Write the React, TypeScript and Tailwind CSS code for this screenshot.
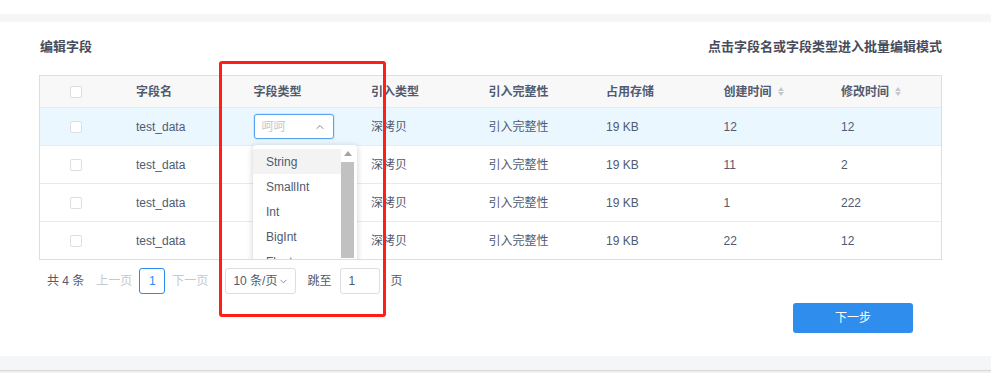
import { ChevronDown, ChevronUp } from 'lucide-react';

const rows = [
  { name: 'test_data', created: '12', modified: '12' },
  { name: 'test_data', created: '11', modified: '2' },
  { name: 'test_data', created: '1', modified: '222' },
  { name: 'test_data', created: '22', modified: '12' },
];

const types = ['String', 'SmallInt', 'Int', 'BigInt', 'Float', 'Double'];

const cols = 'grid grid-cols-[78px_repeat(6,117.5px)_1fr]';

const Checkbox = () => (
  <div className="flex justify-center pr-[6px]">
    <span className="block h-[12px] w-[12px] rounded-[2px] border border-[#dcdee2] bg-white" />
  </div>
);

const SortIcon = () => (
  <span className="ml-[6px] inline-flex flex-col gap-[1px]">
    <span className="h-0 w-0 border-x-[3.5px] border-b-[4px] border-x-transparent border-b-[#c5c8ce]" />
    <span className="h-0 w-0 border-x-[3.5px] border-t-[4px] border-x-transparent border-t-[#c5c8ce]" />
  </span>
);

// dropdown for the field type select, clipped by the table
const TypeDropdown = () => (
  <div className="absolute left-[213px] top-[69px] z-10 flex h-[220px] w-[104px] rounded-[3px] bg-white shadow-[0_1px_6px_rgba(0,0,0,0.2)]">
    <div className="flex-1 pt-[4px]">
      {types.map((t, i) => (
        <div
          key={t}
          className={`flex h-[25px] items-center pl-[13px] text-[12px] text-[#515a6e] ${i === 0 ? 'bg-[#f3f3f3]' : ''}`}
        >
          {t}
        </div>
      ))}
    </div>
    <div className="mr-[3px] flex w-[13px] flex-col items-center pt-[6px]">
      <span className="h-0 w-0 border-x-[4px] border-b-[5px] border-x-transparent border-b-[#a3a3a3]" />
      <div className="mt-[6px] h-[96px] w-full bg-[#c1c1c1]" />
    </div>
  </div>
);

export default function App() {
  return (
    <div
      className="relative h-[373px] w-[991px] overflow-hidden bg-white"
      style={{ fontFamily: '"Liberation Sans", "Noto Sans CJK SC", sans-serif' }}
    >
      <div className="h-[14px] bg-white" />
      <div className="h-[8px] bg-[#f5f6f7]" />

      <div className="h-[334px] bg-white px-[39px] pt-[15px]">
        <div className="mr-[10px] flex h-[20px] items-center justify-between pl-[1px] text-[13px] font-bold text-[#464c5b]">
          <span>编辑字段</span>
          <span>点击字段名或字段类型进入批量编辑模式</span>
        </div>

        <div className="relative mr-[10px] mt-[18px] overflow-hidden border border-[#dcdee2]">
          <div className={`${cols} h-[31px] items-center bg-[#f8f8f9] text-[12px] font-bold text-[#515a6e]`}>
            <Checkbox />
            {['字段名', '字段类型', '引入类型', '引入完整性', '占用存储'].map((h) => (
              <div key={h} className="pl-[18px]">
                {h}
              </div>
            ))}
            <div className="flex items-center pl-[18px]">
              创建时间
              <SortIcon />
            </div>
            <div className="flex items-center pl-[18px]">
              修改时间
              <SortIcon />
            </div>
          </div>

          {rows.map((r, i) => (
            <div
              key={i}
              className={`${cols} h-[38px] items-center border-t border-[#e8eaec] text-[12px] text-[#515a6e] ${i === 0 ? 'bg-[#ebf7ff]' : 'bg-white'}`}
            >
              <Checkbox />
              <div className="pl-[18px]">{r.name}</div>
              <div className="pl-[18px]">
                {i === 0 && (
                  <div className="flex h-[25px] w-[80px] items-center justify-between rounded-[3px] border border-[#57a3f3] bg-white pl-[7px] pr-[7px] shadow-[0_0_0_1px_rgba(45,140,240,0.12)]">
                    <span className="text-[12px] text-[#c5c8ce]">呵呵</span>
                    <ChevronUp size={12} strokeWidth={2} className="text-[#808695]" />
                  </div>
                )}
              </div>
              <div className="pl-[18px]">深拷贝</div>
              <div className="pl-[18px]">引入完整性</div>
              <div className="pl-[18px]">19 KB</div>
              <div className="pl-[18px]">{r.created}</div>
              <div className="pl-[18px]">{r.modified}</div>
            </div>
          ))}

          <TypeDropdown />
        </div>

        <div className="mt-[8px] flex h-[26px] items-center whitespace-nowrap pl-[8px] text-[12px] text-[#515a6e]">
          <span>共 4 条</span>
          <span className="ml-[12px] text-[#c5c8ce]">上一页</span>
          <span className="ml-[7px] flex h-[26px] w-[26px] items-center justify-center rounded-[3px] border border-[#2d8cf0] text-[#2d8cf0]">
            1
          </span>
          <span className="ml-[7px] text-[#c5c8ce]">下一页</span>
          <span className="ml-[17px] flex h-[26px] w-[71px] items-center justify-between rounded-[3px] border border-[#dcdee2] pl-[7px] pr-[6px]">
            10 条/页
            <ChevronDown size={11} strokeWidth={2} className="text-[#808695]" />
          </span>
          <span className="ml-[11px]">跳至</span>
          <span className="ml-[9px] flex h-[26px] w-[40px] items-center rounded-[3px] border border-[#dcdee2] pl-[7px]">
            1
          </span>
          <span className="ml-[10px]">页</span>
        </div>

        <div className="mr-[39px] mt-[9px] flex justify-end">
          <button className="h-[30px] w-[120px] rounded-[3px] bg-[#2e8ded] text-[12px] text-white">
            下一步
          </button>
        </div>
      </div>

      <div className="h-[14px] bg-[#f5f6f7]" />
      <div className="h-[1px] bg-[#d7d7d7]" />
      <div className="h-[2px] bg-[#f0f0f0]" />

      {/* red annotation frame */}
      <div className="pointer-events-none absolute left-[219px] top-[61px] h-[256px] w-[167px] rounded-[3px] border-[3px] border-[#ff1f14]" />
    </div>
  );
}
